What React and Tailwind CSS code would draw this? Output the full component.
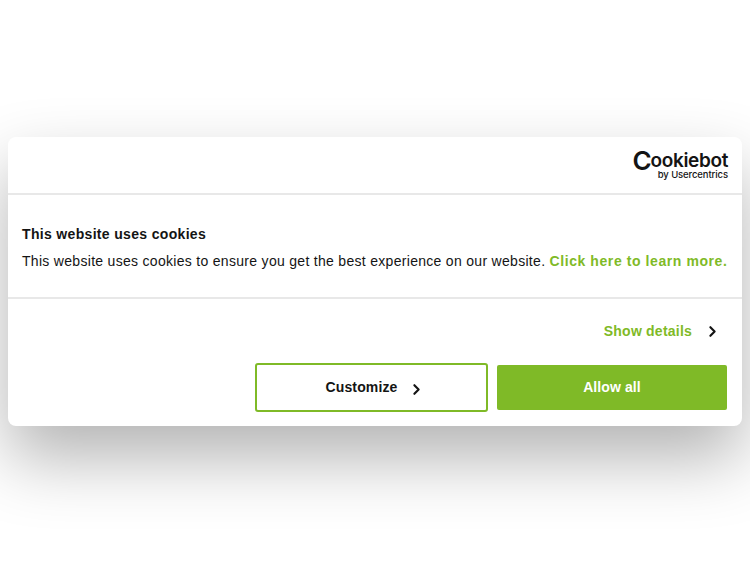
import { ChevronRight } from 'lucide-react';

const GREEN = 'text-[#7fba27]';

export default function App() {
    return (
        <div className="h-[563px] w-[750px] overflow-hidden bg-white pt-[137px] px-2 font-['Liberation_Sans',Arial,sans-serif] text-[#141414]">
            <div className="h-[289px] w-[734px] rounded-lg bg-white shadow-[0_32px_68px_rgba(0,0,0,0.3)] flex flex-col">
                <div className="h-[58px] shrink-0 border-b-2 border-[#e8e8e8] flex flex-col items-end pr-[14px] pt-[15px]">
                    <span className="h-[18px] font-['Inter',sans-serif] font-semibold text-[#141414] flex items-center">
                        <span className="text-[26px] leading-[18px] font-semibold tracking-[-1.2px]">C</span>
                        <span className="text-[19px] leading-[18px] tracking-[-0.35px]">ookiebot</span>
                    </span>
                    <span className="mt-[1px] font-['Inter',sans-serif] text-[9.5px] leading-[8px] font-medium tracking-[-0.1px] text-[#141414]">by Usercentrics</span>
                </div>
                <div className="h-[104px] shrink-0 border-b-2 border-[#e8e8e8] px-[14px] pt-[29px]">
                    <h2 className="text-[14px] leading-[20px] font-bold tracking-[0.33px]">This website uses cookies</h2>
                    <p className="mt-[7px] text-[14px] leading-[20px] tracking-[0.3px] whitespace-nowrap">
                        This website uses cookies to ensure you get the best experience on our website.{' '}
                        <a className={`font-bold tracking-[0.58px] ${GREEN}`}>Click here to learn more.</a>
                    </p>
                </div>
                <div className="flex-1 px-[15px]">
                    <div className="mt-[22px] flex items-center justify-end pr-[6px]">
                        <span className={`text-[14px] leading-[20px] font-bold tracking-[0.22px] ${GREEN}`}>Show details</span>
                        <ChevronRight className="ml-[12px] h-[17px] w-[17px] text-[#141414]" strokeWidth={3} />
                    </div>
                    <div className="mt-[22px] flex items-center gap-[9px]">
                        <button className="ml-[232px] h-[49px] w-[233px] rounded-[3px] border-2 border-[#7fba27] flex items-center justify-center text-[14px] font-bold tracking-[0.15px] text-[#141414]">
                            <span className="ml-[7px]">Customize</span>
                            <ChevronRight className="ml-[10px] mt-[4px] h-[17px] w-[17px]" strokeWidth={3} />
                        </button>
                        <button className="h-[45px] w-[230px] rounded-[2px] bg-[#7fba27] text-[14px] font-bold tracking-[0.1px] text-white">
                            Allow all
                        </button>
                    </div>
                </div>
            </div>
        </div>
    );
}
